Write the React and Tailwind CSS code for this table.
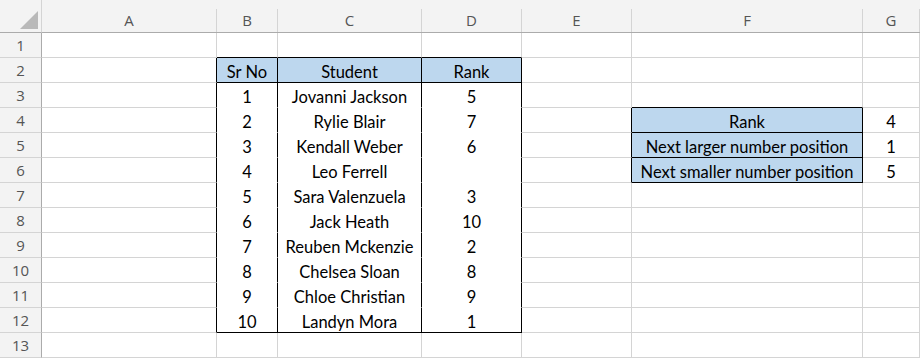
import React from "react";

const COLS = ["A", "B", "C", "D", "E", "F", "G"];
const WIDTHS = [175, 61, 144, 100, 110, 231, 57];

const students = [
  ["1", "Jovanni Jackson", "5"],
  ["2", "Rylie Blair", "7"],
  ["3", "Kendall Weber", "6"],
  ["4", "Leo Ferrell", ""],
  ["5", "Sara Valenzuela", "3"],
  ["6", "Jack Heath", "10"],
  ["7", "Reuben Mckenzie", "2"],
  ["8", "Chelsea Sloan", "8"],
  ["9", "Chloe Christian", "9"],
  ["10", "Landyn Mora", "1"],
];

const data = {};
data["B2"] = { t: "Sr No", fill: true };
data["C2"] = { t: "Student", fill: true };
data["D2"] = { t: "Rank", fill: true };
students.forEach((s, i) => {
  const r = i + 3;
  data["B" + r] = { t: s[0] };
  data["C" + r] = { t: s[1] };
  data["D" + r] = { t: s[2] };
});
data["F4"] = { t: "Rank", fill: true };
data["F5"] = { t: "Next larger number position", fill: true };
data["F6"] = { t: "Next smaller number position", fill: true };
data["G4"] = { t: "4" };
data["G5"] = { t: "1" };
data["G6"] = { t: "5" };

const inT1 = (c, r) => c >= 1 && c <= 3 && r >= 2 && r <= 12;
const inF = (c, r) => c === 5 && r >= 4 && r <= 6;

function Cell({ c, r }) {
  const d = data[COLS[c] + r];
  const rightBlack = inT1(c, r) || inT1(c + 1, r) || inF(c, r) || inF(c + 1, r);
  let bottom = "border-b-[#d4d4d4]";
  if (inT1(c, r)) {
    if (r === 2 || r === 12) bottom = "border-b-black";
    else bottom = "border-b-white";
  } else if (c >= 1 && c <= 3 && r === 1) bottom = "border-b-black";
  if (inF(c, r) || inF(c, r + 1)) bottom = "border-b-black";
  const right = rightBlack ? "border-r-black" : "border-r-[#d4d4d4]";
  const bg = d && d.fill ? "bg-[#bdd7ee]" : "bg-white";
  return (
    <div
      className={`h-[25px] border-r border-b ${right} ${bottom} ${bg} flex items-end justify-center pb-[1px] text-[16.5px] leading-[18px] text-black whitespace-nowrap overflow-visible`}
      style={{ fontFamily: "Lato, 'Open Sans', sans-serif" }}
    >
      {d ? d.t : ""}
    </div>
  );
}

export default function App() {
  const rows = Array.from({ length: 13 }, (_, i) => i + 1);
  return (
    <div
      className="w-[920px] h-[359px] overflow-hidden bg-white"
      style={{ fontFamily: "'Open Sans', 'Noto Sans', sans-serif" }}
    >
      <div
        className="grid"
        style={{ gridTemplateColumns: `42px ${WIDTHS.map((w) => w + "px").join(" ")}` }}
      >
        <div className="h-[33px] bg-[#f3f3f3] border-r border-b border-r-[#d4d4d4] border-b-[#ababab] flex items-end justify-end pr-[3px] pb-[3px]">
          <svg width="18" height="18" viewBox="0 0 18 18">
            <polygon points="0,18 18,0 18,18" fill="#b9b9b9" />
          </svg>
        </div>
        {COLS.map((col) => (
          <div key={col} className="h-[33px] bg-[#f3f3f3] border-b border-b-[#ababab] pt-[9px] flex flex-col">
            <div className="flex-1 border-r border-r-[#d4d4d4] flex items-center justify-center text-[15px] text-[#555] leading-none pb-[1px]">
              {col}
            </div>
          </div>
        ))}
        {rows.map((r) => (
          <React.Fragment key={r}>
            <div className="h-[25px] bg-[#f3f3f3] border-r border-b border-r-[#ababab] border-b-[#d4d4d4] flex items-center justify-center text-[15px] text-[#555] leading-none">
              {r}
            </div>
            {COLS.map((col, c) => (
              <Cell key={col} c={c} r={r} />
            ))}
          </React.Fragment>
        ))}
      </div>
    </div>
  );
}
